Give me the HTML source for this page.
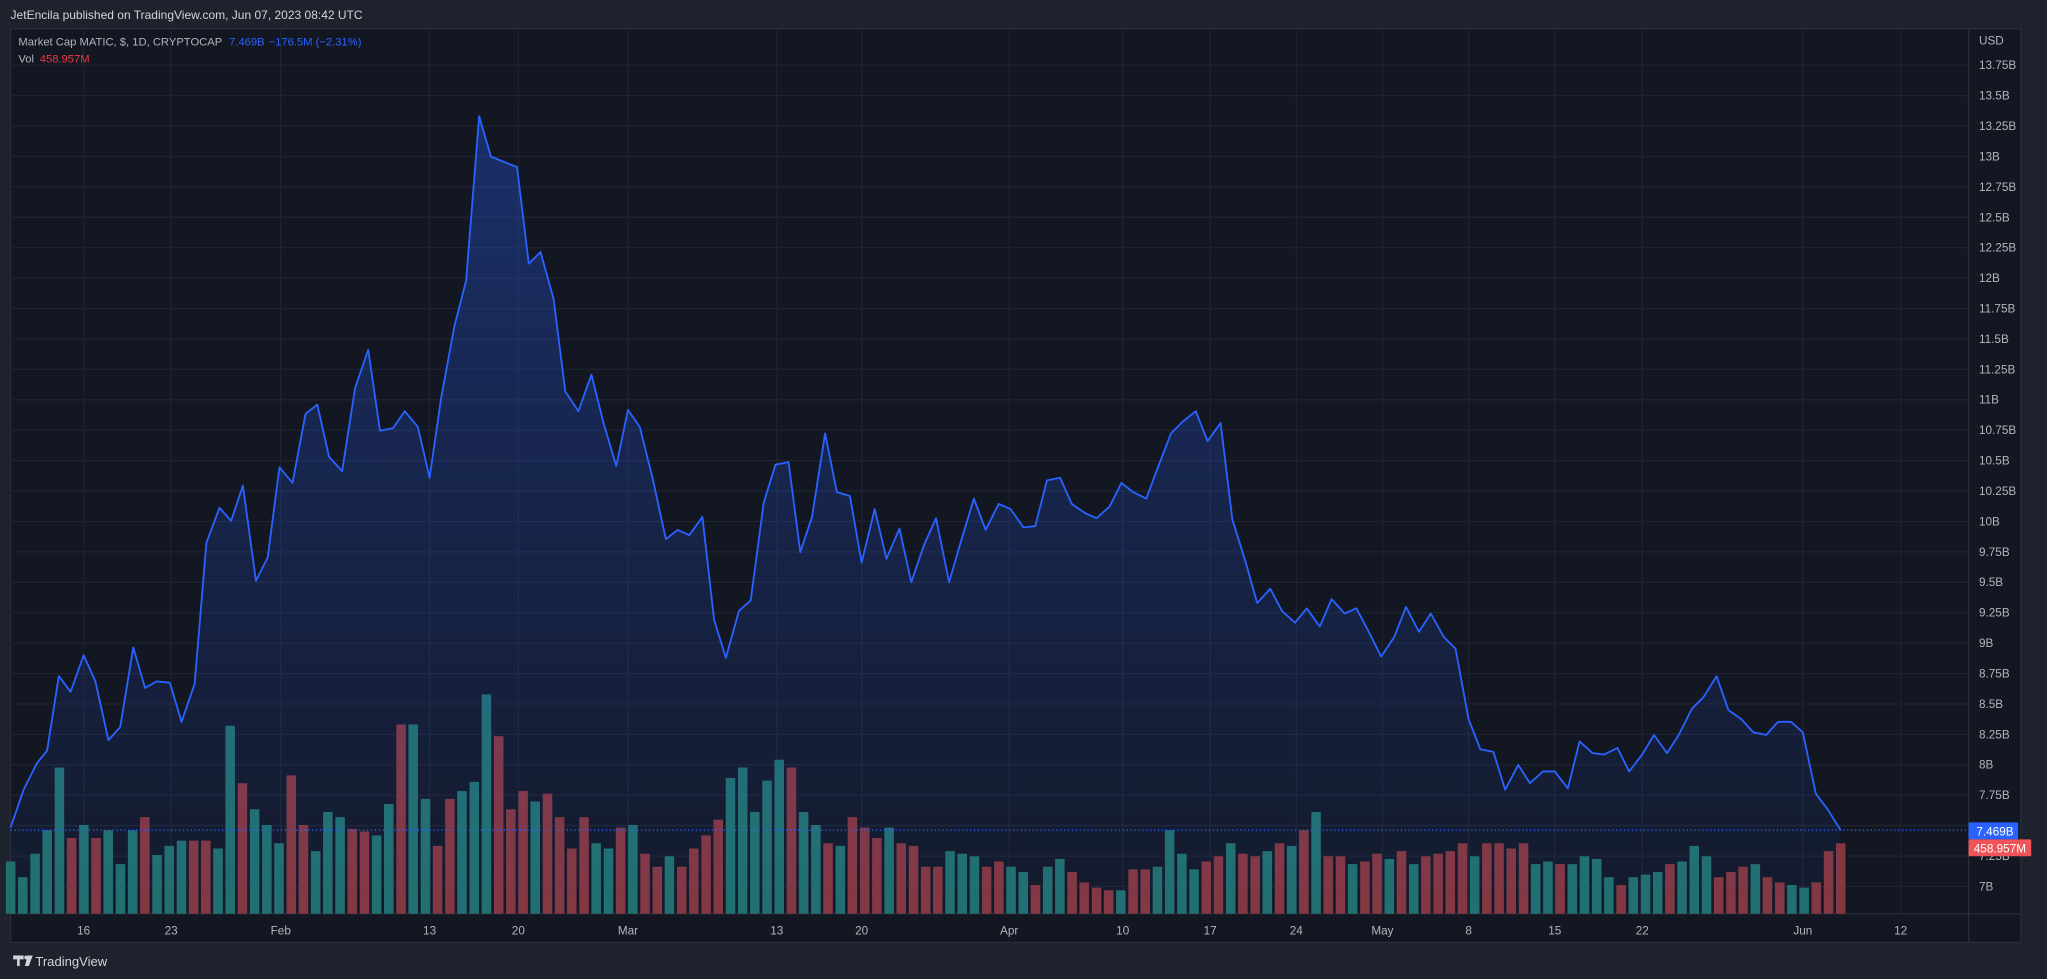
<!DOCTYPE html>
<html><head><meta charset="utf-8"><style>
html,body{margin:0;padding:0;background:#1e222d;overflow:hidden}
svg{display:block}
</style></head><body>
<svg id="s" width="2047" height="979" viewBox="0 0 1568 750" xmlns="http://www.w3.org/2000/svg" font-family="Liberation Sans, sans-serif">
<defs><linearGradient id="g" x1="0" y1="0" x2="0" y2="1"><stop offset="0" stop-color="#2962ff" stop-opacity="0.32"/><stop offset="1" stop-color="#2962ff" stop-opacity="0.04"/></linearGradient></defs>
<rect width="1568" height="750" fill="#1e222d"/>
<text x="8" y="14.5" fill="#d1d4dc" font-size="9.2">JetEncila published on TradingView.com, Jun 07, 2023 08:42 UTC</text>
<rect x="8" y="22" width="1540" height="700" fill="#131722" stroke="#2a2e39" stroke-width="1"/>
<g id="grid" stroke="#1f2330" stroke-width="1"></g>
<line x1="1508" y1="22" x2="1508" y2="722" stroke="#2a2e39"/>
<line x1="8" y1="700" x2="1548" y2="700" stroke="#2a2e39"/>
<g id="vol"></g>
<path id="area" fill="url(#g)"/>
<path id="line" fill="none" stroke="#2962ff" stroke-width="1.4" stroke-linejoin="round"/>
<line x1="8" y1="636" x2="1508" y2="636" stroke="#2962ff" stroke-width="1" stroke-dasharray="1,2"/>
<g id="labels" fill="#b2b5be" font-size="9"></g>
<text x="1516" y="34" fill="#b2b5be" font-size="9">USD</text>
<text x="14" y="35" font-size="8.6" fill="#b2b5be">Market Cap MATIC, $, 1D, CRYPTOCAP <tspan fill="#2962ff" dx="3">7.469B</tspan><tspan fill="#2962ff" dx="3">−176.5M (−2.31%)</tspan></text>
<text x="14" y="48" font-size="8.6" fill="#b2b5be">Vol <tspan fill="#f23645" dx="2">458.957M</tspan></text>
<rect x="1508" y="630" width="38" height="13" rx="1" fill="#2962ff"/>
<text x="1514" y="640" font-size="9" fill="#fff">7.469B</text>
<rect x="1508" y="643" width="48" height="13" rx="1" fill="#f05358"/>
<text x="1512" y="653" font-size="9" fill="#fff">458.957M</text>
<g fill="#d1d4dc"><path d="M10 732h8v3h-3v5h-2v-5h-3z"/><circle cx="20" cy="733.5" r="1.5"/><path d="M21 732h4l-3 8h-3z"/></g>
<text x="27" y="740" font-size="10" fill="#d1d4dc">TradingView</text>
</svg>
<script>
const NS="http://www.w3.org/2000/svg";
function el(t,a,p,txt){const e=document.createElementNS(NS,t);for(const k in a)e.setAttribute(k,a[k]);if(txt)e.textContent=txt;document.getElementById(p).appendChild(e);return e;}
const prices=["13.75B","13.5B","13.25B","13B","12.75B","12.5B","12.25B","12B","11.75B","11.5B","11.25B","11B","10.75B","10.5B","10.25B","10B","9.75B","9.5B","9.25B","9B","8.75B","8.5B","8.25B","8B","7.75B","7.5B","7.25B","7B"];
prices.forEach((p,i)=>{const y=50+i*23.3;el("line",{x1:8,x2:1508,y1:y,y2:y},"grid");if(p!="7.5B")el("text",{x:1516,y:y+3},"labels",p);});
const times=[[64,"16"],[131,"23"],[215,"Feb"],[329,"13"],[397,"20"],[481,"Mar"],[595,"13"],[660,"20"],[773,"Apr"],[860,"10"],[927,"17"],[993,"24"],[1059,"May"],[1125,"8"],[1191,"15"],[1258,"22"],[1381,"Jun"],[1456,"12"]];
times.forEach(([x,t])=>{el("line",{x1:x,x2:x,y1:22,y2:700},"grid");el("text",{x:x,y:716,"text-anchor":"middle"},"labels",t);});
const pts=[[8,634],[18,605],[28,585],[36,575],[45,518],[54,530],[64,502],[73,522],[83,567],[92,557],[102,496],[111,527],[120,522],[130,523],[139,553],[149,524],[158,416],[168,389],[177,399],[186,372],[196,445],[205,427],[214,358],[224,370],[234,317],[243,310],[252,350],[262,361],[272,297],[282,268],[291,330],[301,328],[310,315],[320,327],[329,366],[338,304],[348,250],[357,215],[367,89],[376,120],[386,124],[396,128],[405,202],[414,193],[424,229],[433,300],[443,315],[453,287],[462,323],[472,357],[481,314],[490,327],[500,367],[510,413],[519,406],[528,410],[538,396],[547,475],[556,504],[566,468],[575,460],[585,385],[594,356],[604,354],[613,423],[622,396],[632,332],[641,377],[651,380],[660,431],[670,390],[679,428],[689,405],[698,446],[708,417],[717,397],[727,446],[736,415],[746,382],[755,406],[765,386],[774,390],[784,404],[793,403],[802,368],[812,366],[821,386],[831,393],[840,397],[850,388],[859,370],[868,377],[878,382],[887,358],[897,332],[906,323],[916,315],[925,338],[935,324],[944,398],[954,430],[963,462],[973,451],[982,468],[992,477],[1001,466],[1011,480],[1020,459],[1030,470],[1039,466],[1049,485],[1058,503],[1068,488],[1077,465],[1087,484],[1096,470],[1106,488],[1115,497],[1125,551],[1134,574],[1144,576],[1153,605],[1163,586],[1172,600],[1182,591],[1191,591],[1201,604],[1210,568],[1220,577],[1229,578],[1239,573],[1248,591],[1258,578],[1267,563],[1277,577],[1286,563],[1296,543],[1305,534],[1315,518],[1324,544],[1334,551],[1343,561],[1353,563],[1362,553],[1372,553],[1381,561],[1391,608],[1400,620],[1410,636]];
const d="M"+pts.map(p=>p.join(",")).join("L");
document.getElementById("line").setAttribute("d",d);
document.getElementById("area").setAttribute("d",d+"L1410,700L8,700Z");
const V="660t 672t 654t 636t 588t 642r 632t 642r 636t 662t 636t 626r 655t 648t 644t 644r 644r 650t 556t 600r 620t 632t 646t 594r 632r 652t 622t 626t 635r 637r 640t 616t 555r 555t 612t 648r 612r 606t 599t 532t 564r 620r 606r 614t 608r 626r 650r 626r 646t 650t 634r 632t 654r 664r 656t 664r 650r 640r 628r 596t 588t 622t 598t 582t 588r 622t 632t 646r 648t 626r 634r 642r 634t 646r 648r 664r 664r 652t 654t 656t 664r 660r 664t 668t 678r 664t 658t 668r 676r 680r 682r 682t 666r 666r 664t 636t 654t 666t 660r 656r 646t 654r 656r 652t 646r 648t 636r 622t 656r 656r 662t 660r 654r 658t 652r 662t 656r 654r 652r 646r 656t 646r 646r 650r 646r 662t 660t 662r 662t 656t 658t 672t 678r 672t 670t 668t 662r 660t 648t 656t 672r 668r 664r 662t 672r 676r 678t 680t 676r 652r 646r".split(" ");
const n=V.length,step=(1410-8)/(n-1);
V.forEach((v,i)=>{const y=parseInt(v),c=v.slice(-1)=="t"?"#22706b":"#87363b";const x=8+i*step;el("rect",{x:(x-3.6).toFixed(1),y:y,width:7.3,height:700-y,fill:c},"vol");});
</script>
</body></html>
